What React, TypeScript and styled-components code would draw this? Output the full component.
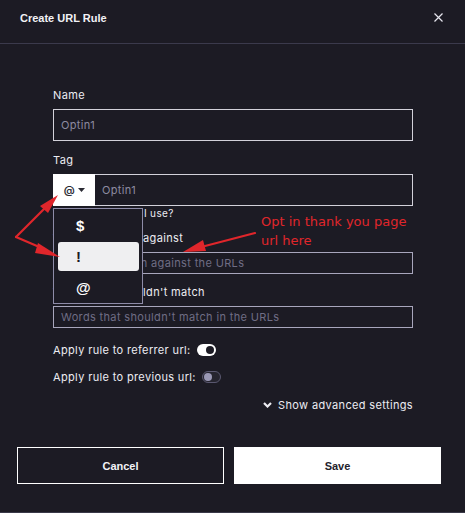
import React from "react";
import styled, { createGlobalStyle } from "styled-components";

const Global = createGlobalStyle`
  html, body { margin: 0; padding: 0; background: #1c1b24; }
  * { box-sizing: border-box; }
`;

const Modal = styled.div`
  position: relative;
  width: 465px;
  height: 513px;
  background: #1c1b24;
  border-bottom: 1px solid #3a3948;
  font-family: Inter, "Liberation Sans", sans-serif;
  letter-spacing: 0.35px;
  color: #ececf2;
  overflow: hidden;
`;

const Header = styled.div`
  height: 44px;
  padding: 11px 22px 0 20px;
  display: flex;
  justify-content: space-between;
  align-items: flex-start;
  border-bottom: 1px solid #3b3a4c;
`;

const Title = styled.div`
  font-family: "Liberation Sans", Arial, sans-serif;
  font-weight: bold;
  font-size: 11px;
  line-height: 14px;
  letter-spacing: 0;
  color: #f2f2f6;
`;

const Close = styled.svg`
  margin-top: 2px;
`;

const Body = styled.div`
  position: relative;
  padding: 44px 52px 0 53px;
  display: flex;
  flex-direction: column;
`;

const Label = styled.div<{ $mt?: number }>`
  font-size: 11px;
  line-height: 14px;
  margin-top: ${(p) => p.$mt ?? 0}px;
  margin-bottom: 7px;
  color: #ececf2;
`;

const Input = styled.div<{ $h: number; $light?: boolean }>`
  height: ${(p) => p.$h}px;
  border: 1px solid ${(p) => (p.$light ? "#d2d1da" : "#a8a6bc")};
  display: flex;
  align-items: center;
  padding-left: 7px;
  font-size: 11px;
  color: ${(p) => (p.$light ? "#8d8ba0" : "#6f6d84")};
`;

const TagGroup = styled.div`
  position: relative;
  display: flex;
  height: 32px;
`;

const TagSelect = styled.div`
  width: 42px;
  background: #ffffff;
  color: #2a2a33;
  display: flex;
  align-items: center;
  justify-content: center;
  gap: 3px;
  padding-left: 1px;
  font-size: 11px;
  font-weight: 600;
`;

const TagInput = styled.div`
  flex: 1;
  border: 1px solid #d2d1da;
  border-left: none;
  display: flex;
  align-items: center;
  padding-left: 7px;
  font-size: 11px;
  color: #8d8ba0;
`;

const Help = styled.div`
  font-size: 10px;
  line-height: 14px;
  color: #ececf2;
`;

const Dropdown = styled.div`
  position: absolute;
  left: 0;
  top: 34px;
  width: 90px;
  height: 96px;
  border: 1px solid #8e8ca8;
  background: #1c1b24;
  padding: 2px 3px 0 4px;
  display: flex;
  flex-direction: column;
  gap: 2px;
  z-index: 2;
`;

const Option = styled.div<{ $active?: boolean }>`
  height: 29px;
  border-radius: 3px;
  background: ${(p) => (p.$active ? "#efeff1" : "transparent")};
  color: ${(p) => (p.$active ? "#1c1b24" : "#ffffff")};
  display: flex;
  align-items: center;
  padding-left: 18px;
  font-family: "Liberation Sans", Arial, sans-serif;
  font-weight: bold;
  font-size: 15px;
  letter-spacing: 0;
`;

const ToggleRow = styled.div<{ $mt: number; $gap: number }>`
  display: flex;
  align-items: center;
  gap: ${(p) => p.$gap}px;
  margin-top: ${(p) => p.$mt}px;
  font-size: 11px;
  line-height: 14px;
`;

const Toggle = styled.div<{ $on?: boolean }>`
  position: relative;
  width: 19px;
  height: 12px;
  border-radius: 6px;
  background: ${(p) => (p.$on ? "#ffffff" : "#26252f")};
  border: ${(p) => (p.$on ? "none" : "1px solid #5a5870")};
  &::after {
    content: "";
    position: absolute;
    top: ${(p) => (p.$on ? 2 : 1)}px;
    ${(p) => (p.$on ? "right: 2px;" : "left: 1px;")}
    width: 8px;
    height: 8px;
    border-radius: 50%;
    background: ${(p) => (p.$on ? "#1c1b24" : "#9a98b5")};
  }
`;

const Advanced = styled.div`
  margin-top: 14px;
  align-self: flex-end;
  display: flex;
  align-items: center;
  gap: 6px;
  font-size: 11px;
  line-height: 14px;
  color: #ececf2;
`;

const Footer = styled.div`
  position: absolute;
  left: 17px;
  right: 24px;
  top: 447px;
  display: flex;
  gap: 10px;
`;

const Button = styled.div<{ $primary?: boolean }>`
  flex: 1;
  height: 37px;
  display: flex;
  align-items: center;
  justify-content: center;
  font-family: "Liberation Sans", Arial, sans-serif;
  font-weight: bold;
  font-size: 11px;
  letter-spacing: 0;
  background: ${(p) => (p.$primary ? "#ffffff" : "transparent")};
  color: ${(p) => (p.$primary ? "#23222c" : "#f2f2f6")};
  border: 1px solid #ffffff;
`;

const Overlay = styled.svg`
  position: absolute;
  left: 0;
  top: 0;
  pointer-events: none;
  z-index: 5;
`;

const Note = styled.div`
  position: absolute;
  left: 261px;
  top: 212px;
  font-family: "DejaVu Sans", sans-serif;
  font-size: 13px;
  line-height: 19px;
  letter-spacing: 0;
  color: #e0262b;
  z-index: 5;
`;

export default function App() {
  return (
    <Modal>
      <Global />
      <Header>
        <Title>Create URL Rule</Title>
        <Close width="9" height="9" viewBox="0 0 9 9">
          <path d="M0.5 0.5 L8.5 8.5 M8.5 0.5 L0.5 8.5" stroke="#e6e6ee" strokeWidth="1.2" />
        </Close>
      </Header>
      <Body>
        <Label>Name</Label>
        <Input $h={32} $light>Optin1</Input>
        <Label $mt={12}>Tag</Label>
        <TagGroup>
          <TagSelect>
            <span>@</span>
            <svg width="7" height="4" viewBox="0 0 7 4">
              <path d="M0 0 L7 0 L3.5 4 Z" fill="#2a2a33" />
            </svg>
          </TagSelect>
          <TagInput>Optin1</TagInput>
          <Dropdown>
            <Option>$</Option>
            <Option $active>!</Option>
            <Option>@</Option>
          </Dropdown>
        </TagGroup>
        <Help>Which tag should I use?</Help>
        <Label $mt={11}>Words to match against</Label>
        <Input $h={22}>Words to match against the URLs</Input>
        <Label $mt={11}>Words that shouldn't match</Label>
        <Input $h={22}>Words that shouldn't match in the URLs</Input>
        <ToggleRow $mt={15} $gap={6}>
          Apply rule to referrer url:
          <Toggle $on />
        </ToggleRow>
        <ToggleRow $mt={13} $gap={6}>
          Apply rule to previous url:
          <Toggle />
        </ToggleRow>
        <Advanced>
          <svg width="9" height="6" viewBox="0 0 9 6">
            <path d="M1 1 L4.5 4.5 L8 1" stroke="#ececf2" strokeWidth="2.2" fill="none" />
          </svg>
          Show advanced settings
        </Advanced>
      </Body>
      <Footer>
        <Button>Cancel</Button>
        <Button $primary>Save</Button>
      </Footer>
      <Overlay width="465" height="513" viewBox="0 0 465 513">
        <g stroke="#e0262b" strokeWidth="2.2" fill="none" strokeLinecap="round">
          <path d="M16 237 L50 203" />
          <path d="M16 237 L44 249" />
          <path d="M255 233 L205 246" />
        </g>
        <g fill="#e0262b">
          <polygon points="58,195 40,206 48,213" />
          <polygon points="60,257 38,243 35,253" />
          <polygon points="183,252 203,240 206,251" />
        </g>
      </Overlay>
      <Note>
        Opt in thank you page
        <br />
        url here
      </Note>
    </Modal>
  );
}
